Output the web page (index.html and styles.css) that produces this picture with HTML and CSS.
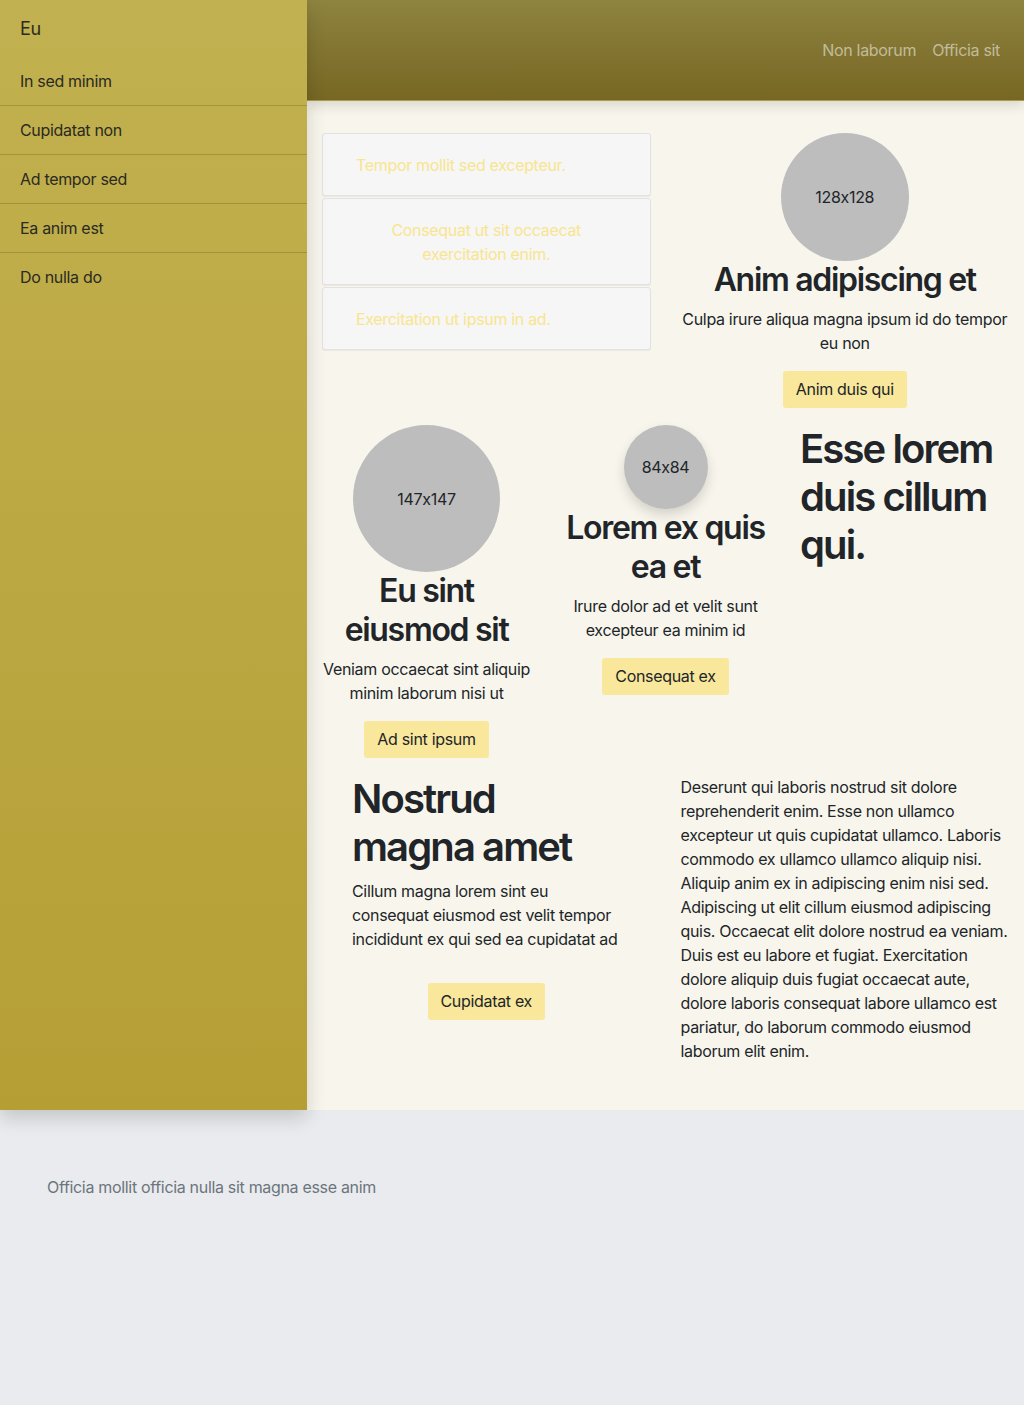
FILE: index.html
```html
<!DOCTYPE html>
<html lang="en">
<head>
<meta charset="utf-8">
<title>Eu</title>
<link rel="stylesheet" href="styles.css">
</head>
<body>
<div class="shell">
  <aside class="sidebar">
    <div class="brand">Eu</div>
    <nav class="side-nav">
      <a class="side-link" href="#">In sed minim</a>
      <a class="side-link" href="#">Cupidatat non</a>
      <a class="side-link" href="#">Ad tempor sed</a>
      <a class="side-link" href="#">Ea anim est</a>
      <a class="side-link last" href="#">Do nulla do</a>
    </nav>
  </aside>
  <div class="content">
    <header class="topbar">
      <nav class="top-nav">
        <a href="#">Non laborum</a>
        <a href="#">Officia sit</a>
      </nav>
    </header>
    <main class="main">
      <section class="row two">
        <div class="cards">
          <div class="card">Tempor mollit sed excepteur.</div>
          <div class="card center">Consequat ut sit occaecat exercitation enim.</div>
          <div class="card">Exercitation ut ipsum in ad.</div>
        </div>
        <div class="feature">
          <div class="avatar a128">128x128</div>
          <h2 class="title">Anim adipiscing et</h2>
          <p class="text">Culpa irure aliqua magna ipsum id do tempor eu non</p>
          <a class="btn" href="#">Anim duis qui</a>
        </div>
      </section>
      <section class="row three">
        <div class="feature">
          <div class="avatar a147">147x147</div>
          <h2 class="title">Eu sint eiusmod sit</h2>
          <p class="text">Veniam occaecat sint aliquip minim laborum nisi ut</p>
          <a class="btn" href="#">Ad sint ipsum</a>
        </div>
        <div class="feature">
          <div class="avatar a84">84x84</div>
          <h2 class="title">Lorem ex quis ea et</h2>
          <p class="text">Irure dolor ad et velit sunt excepteur ea minim id</p>
          <a class="btn" href="#">Consequat ex</a>
        </div>
        <div class="lead-col">
          <h1 class="big">Esse lorem duis cillum qui.</h1>
        </div>
      </section>
      <section class="row two">
        <div class="intro">
          <h1 class="big">Nostrud magna amet</h1>
          <p class="text">Cillum magna lorem sint eu consequat eiusmod est velit tempor incididunt ex qui sed ea cupidatat ad</p>
          <div class="intro-action"><a class="btn" href="#">Cupidatat ex</a></div>
        </div>
        <div class="body-col">
          <p class="text">Deserunt qui laboris nostrud sit dolore reprehenderit enim. Esse non ullamco excepteur ut quis cupidatat ullamco. Laboris commodo ex ullamco ullamco aliquip nisi. Aliquip anim ex in adipiscing enim nisi sed. Adipiscing ut elit cillum eiusmod adipiscing quis. Occaecat elit dolore nostrud ea veniam. Duis est eu labore et fugiat. Exercitation dolore aliquip duis fugiat occaecat aute, dolore laboris consequat labore ullamco est pariatur, do laborum commodo eiusmod laborum elit enim.</p>
        </div>
      </section>
    </main>
  </div>
</div>
<footer class="footer">
  <p class="footer-text">Officia mollit officia nulla sit magna esse anim</p>
</footer>
</body>
</html>
```
FILE: styles.css
```css
* { box-sizing: border-box; }
html, body { margin: 0; padding: 0; }
body {
  font-family: Inter, "Noto Sans", "Liberation Sans", sans-serif;
  font-size: 16px;
  line-height: 1.5;
  letter-spacing: -0.32px;
  font-feature-settings: "calt" 0;
  color: #212529;
  background: #eaebee;
  min-height: 1405px;
}
a { text-decoration: none; color: inherit; }

.shell {
  display: flex;
  align-items: stretch;
}

.sidebar {
  width: 307px;
  flex: 0 0 307px;
  background: linear-gradient(to bottom, #c2b150, #b59f35);
  box-shadow: 0 8px 18px rgba(0,0,0,0.16);
  position: relative;
  z-index: 2;
}
.brand {
  font-size: 18px;
  line-height: 27px;
  padding: 15px 20px;
  color: #2a2a22;
}
.side-nav { display: flex; flex-direction: column; }
.side-link {
  padding: 12px 20px;
  line-height: 24px;
  color: #2a2a22;
  border-bottom: 1px solid rgba(110, 95, 20, 0.35);
}
.side-link.last { border-bottom: none; }

.content {
  flex: 1;
  display: flex;
  flex-direction: column;
  background: #f8f6ec;
}
.topbar {
  height: 101px;
  background: linear-gradient(to bottom, #8e833f, #776723);
  border-bottom: 1px solid #a99c4c;
  box-shadow: 0 4px 12px rgba(0,0,0,0.14);
  display: flex;
  justify-content: flex-end;
  align-items: center;
  padding: 0 16px 0 0;
  position: relative;
  z-index: 1;
}
.top-nav { display: flex; }
.top-nav a {
  padding: 0 8px;
  color: rgba(255,255,255,0.52);
  line-height: 24px;
}

.main {
  padding: 32px 15px 31px;
}
.row {
  display: grid;
  column-gap: 30px;
  margin-bottom: 17px;
}
.row:last-child { margin-bottom: 0; }
.row.two { grid-template-columns: 1fr 1fr; }
.row.three { grid-template-columns: 1fr 1fr 1fr; }

.cards { display: flex; flex-direction: column; gap: 2px; align-self: start; }
.card {
  background: #f6f6f6;
  border: 1px solid #e2e2e2;
  border-radius: 3px;
  box-shadow: 0 1px 1px rgba(0,0,0,0.06);
  padding: 18.5px 33px;
  line-height: 24px;
  color: #f8e58f;
}
.card.center { text-align: center; }

.feature {
  display: flex;
  flex-direction: column;
  align-items: center;
  text-align: center;
}
.avatar {
  border-radius: 50%;
  background: #bdbdbd;
  display: flex;
  align-items: center;
  justify-content: center;
  color: #212529;
  flex: none;
}
.a128 { width: 128px; height: 128px; }
.a147 { width: 147px; height: 147px; }
.a84 { width: 84px; height: 84px; box-shadow: 0 6px 12px rgba(0,0,0,0.15); }

.title {
  font-size: 32px;
  font-weight: 600;
  line-height: 1.2;
  margin: 0 0 8px;
  letter-spacing: -1.3px;
}
.big {
  font-size: 40px;
  font-weight: 600;
  line-height: 1.2;
  margin: 0 0 8px;
  letter-spacing: -1.9px;
}
.text { margin: 0 0 16px; }

.btn {
  display: inline-block;
  background: #f9e79b;
  border-radius: 3px;
  padding: 6px 13px;
  line-height: 25px;
  color: #212529;
}

.intro { padding: 0 30px; }
.intro-action { text-align: center; padding-top: 16px; }

.footer {
  padding: 65px 47px 0;
}
.footer-text {
  margin: 0;
  color: #6c757d;
  line-height: 24px;
}
```
